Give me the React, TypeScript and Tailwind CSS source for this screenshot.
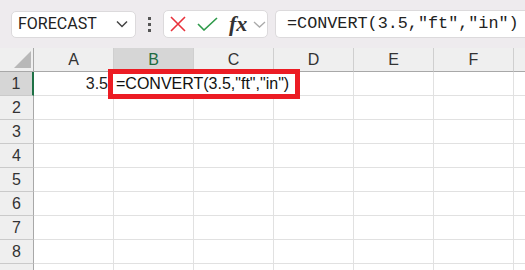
import React from "react";

const cols = ["A", "B", "C", "D", "E", "F", ""];
const rows = [1, 2, 3, 4, 5, 6, 7, 8, 9];

export default function App() {
  return (
    <div
      className="relative w-[525px] h-[270px] overflow-hidden bg-white"
      style={{ fontFamily: '"Liberation Sans", Arial, sans-serif' }}
    >
      {/* Toolbar */}
      <div className="flex items-center h-[48px] bg-[#eeebee] pl-[11px]">
        <div className="flex shrink-0 items-center justify-between w-[125px] h-[27px] bg-white rounded-[5px] border border-[#dcdadc] pl-[6px] pr-[7px]">
          <span
            className="text-[16px] text-[#222] leading-none"
            style={{ fontFamily: "Roboto, sans-serif" }}
          >
            FORECAST
          </span>
          <svg width="12" height="8" viewBox="0 0 12 8">
            <path d="M1 1.5 L6 6.5 L11 1.5" fill="none" stroke="#444" strokeWidth="1.5" />
          </svg>
        </div>
        <div className="flex shrink-0 flex-col gap-[3px] ml-[12px] mr-[12px]">
          <div className="w-[3px] h-[3px] bg-[#555]" />
          <div className="w-[3px] h-[3px] bg-[#555]" />
          <div className="w-[3px] h-[3px] bg-[#555]" />
        </div>
        <div className="flex shrink-0 items-center w-[105px] h-[28px] bg-white rounded-[5px] border border-[#dcdadc] pl-[6px]">
          <svg width="16" height="16" viewBox="0 0 16 16" className="shrink-0">
            <path d="M1 1 L15 15 M15 1 L1 15" stroke="#e8323c" strokeWidth="1.6" fill="none" />
          </svg>
          <svg width="21" height="14" viewBox="0 0 21 14" className="ml-[11px] shrink-0">
            <path d="M1 7 L7 13 L20 1" stroke="#2e9a4a" strokeWidth="1.6" fill="none" />
          </svg>
          <span
            className="ml-[11px] text-[22px] italic font-bold text-[#333] leading-none"
            style={{ fontFamily: '"Liberation Serif", "Times New Roman", serif' }}
          >
            fx
          </span>
          <svg width="13" height="7" viewBox="0 0 13 7" className="ml-[6px] shrink-0">
            <path d="M1 1 L6.5 6 L12 1" fill="none" stroke="#aaa" strokeWidth="1.3" />
          </svg>
        </div>
        <div className="flex shrink-0 items-center w-[270px] h-[28px] bg-white rounded-l-[5px] border border-r-0 border-[#dcdadc] ml-[7px] pl-[11px]">
          <span
            className="text-[16.8px] text-[#222] whitespace-nowrap leading-none"
            style={{ fontFamily: '"Liberation Mono", "Courier New", monospace' }}
          >
            =CONVERT(3.5,"ft","in")
          </span>
        </div>
      </div>

      {/* Column header */}
      <div className="flex h-[24px]">
        <div className="relative w-[34px] shrink-0 bg-[#efefef] border-r border-b border-[#a8a8a8]">
          <svg width="17" height="17" viewBox="0 0 17 17" className="absolute left-[14px] top-[3px]">
            <path d="M17 0 L17 17 L0 17 Z" fill="#b8b8b8" />
          </svg>
        </div>
        {cols.map((c, i) => (
          <div
            key={i}
            className={
              "w-[80px] shrink-0 flex items-center justify-center border-r border-b border-b-[#a8a8a8] border-r-[#cfcfcf] text-[16px] " +
              (c === "B" ? "bg-[#d6d6d6] text-[#1e6b41]" : "bg-[#efefef] text-[#333]")
            }
          >
            {c}
          </div>
        ))}
      </div>

      {/* Body rows */}
      {rows.map((r) => (
        <div key={r} className="flex h-[24px]">
          <div
            className={
              "w-[34px] shrink-0 flex items-center justify-center border-b border-b-[#cacaca] text-[16px] text-[#333] " +
              (r === 1
                ? "bg-[#d6d6d6] border-r-[2px] border-r-[#1e7145]"
                : "bg-[#efefef] border-r border-r-[#a8a8a8]")
            }
          >
            {r < 9 ? r : ""}
          </div>
          {cols.map((c, i) => (
            <div
              key={i}
              className="w-[80px] shrink-0 flex items-center justify-end pr-[5px] border-r border-b border-[#e1e1e1] text-[16px] text-[#222]"
            >
              {r === 1 && c === "A" ? "3.5" : ""}
            </div>
          ))}
        </div>
      ))}

      {/* Highlighted active cell */}
      <div className="absolute left-[108px] top-[69px] w-[192px] h-[30px] border-[5px] border-[#ec1c24] bg-white flex items-center pl-[3px]">
        <span className="text-[16px] text-[#111] whitespace-nowrap leading-none">
          =CONVERT(3.5,"ft","in")
        </span>
      </div>
    </div>
  );
}
